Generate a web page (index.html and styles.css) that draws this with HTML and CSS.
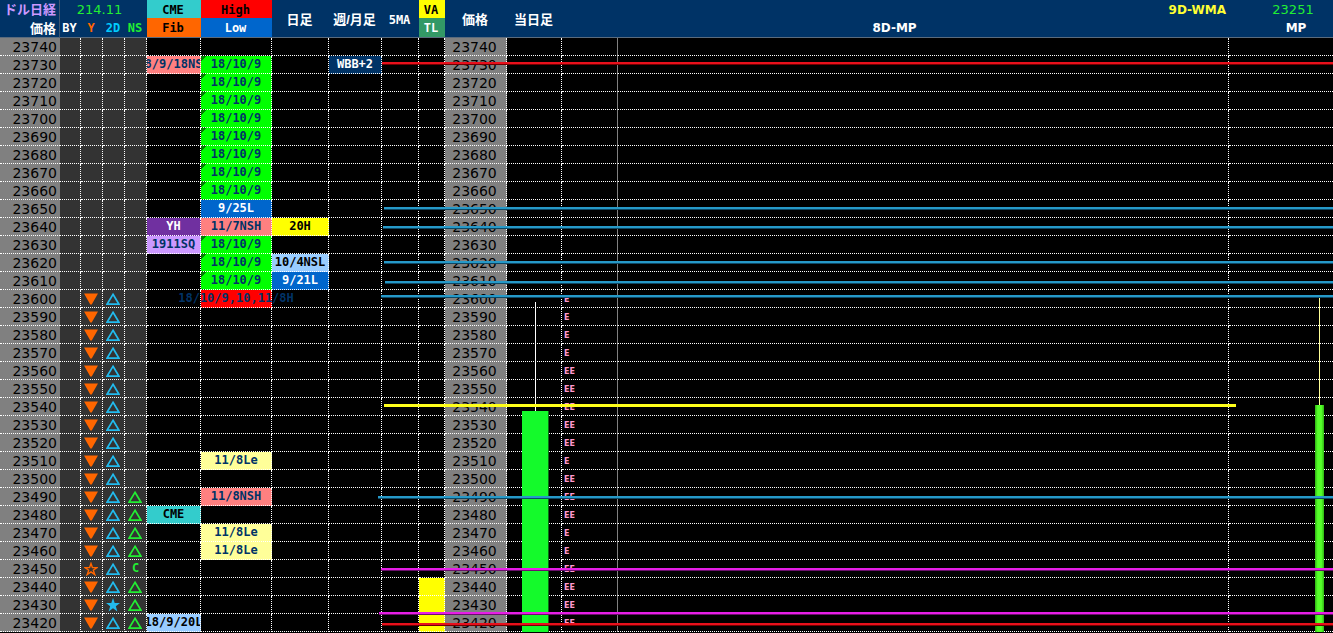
FILE: index.html
```html
<!DOCTYPE html>
<html lang="ja">
<head>
    <meta charset="UTF-8">
    <meta name="viewport" content="width=device-width, initial-scale=1.0">
    <title>ドル日経</title>
    <link rel="stylesheet" href="styles.css">
</head>
<body>
    <svg class="symbols" aria-hidden="true">
        <symbol id="down" viewBox="0 0 14 12"><path d="M0 0.5h14L7.7 11.5H6.3z" fill="currentColor"/></symbol>
        <symbol id="up" viewBox="0 0 14 12"><path d="M7 1.3L13 11.2H1z" fill="none" stroke="currentColor" stroke-width="1.7"/></symbol>
        <symbol id="star" viewBox="0 0 14 14"><path d="M7 0l1.7 5H14L9.8 8.2 11.4 13.5 7 10.3 2.6 13.5 4.2 8.2 0 5h5.3z" fill="currentColor"/></symbol>
        <symbol id="star-open" viewBox="0 0 14 14"><path d="M7 1.5l1.4 4.1H13L9.3 8.2 10.8 12.6 7 9.9 3.2 12.6 4.7 8.2 1 5.6h4.6z" fill="none" stroke="currentColor" stroke-width="1.4"/></symbol>
    </svg>

    <div class="board">
        <table class="sheet">
            <colgroup>
                <col class="c-price"><col class="c-by"><col class="c-mark"><col class="c-mark"><col class="c-mark">
                <col class="c-cme"><col class="c-high"><col class="c-day"><col class="c-week"><col class="c-ma"><col class="c-va">
                <col class="c-price2"><col class="c-today"><col class="c-tpo"><col><col class="c-mp">
            </colgroup>
            <thead>
                <tr>
                    <th class="title">ドル日経</th>
                    <th class="value" colspan="4">214.11</th>
                    <th class="cme">CME</th>
                    <th class="high">High</th>
                    <th class="jp" rowspan="2">日足</th>
                    <th class="jp" rowspan="2">週/月足</th>
                    <th rowspan="2">5MA</th>
                    <th class="va">VA</th>
                    <th class="jp" rowspan="2">価格</th>
                    <th class="jp" rowspan="2">当日足</th>
                    <th class="wma" colspan="2">9D-WMA</th>
                    <th class="value last">23251</th>
                </tr>
                <tr>
                    <th class="sub">価格</th>
                    <th>BY</th>
                    <th class="orange">Y</th>
                    <th class="cyan">2D</th>
                    <th class="green">NS</th>
                    <th class="fib">Fib</th>
                    <th class="low">Low</th>
                    <th class="tl">TL</th>
                    <th class="wide" colspan="2">8D-MP</th>
                    <th class="wide last">MP</th>
                </tr>
            </thead>
            <tbody id="rows"></tbody>
        </table>

        <div class="candle today"></div>
        <div class="candle mp"></div>

        <div class="line red y1"></div>
        <div class="line blue y2"></div>
        <div class="line blue y3"></div>
        <div class="line blue y4"></div>
        <div class="line blue y5"></div>
        <div class="line blue y6"></div>
        <div class="line yellow y7"></div>
        <div class="line blue y8"></div>
        <div class="line pink y9"></div>
        <div class="line pink y10"></div>
        <div class="line red y11"></div>
    </div>

    <script>
        const TOP = 23740;
        const BOTTOM = 23420;

        // price -> { column: [text, style] }
        const cells = {
            23730: { cme: ['18/9/18NSH', 'salmon'], week: ['WBB+2', 'navy'] },
            23650: { high: ['9/25L', 'blue-cell'] },
            23640: { cme: ['YH', 'purple'], high: ['11/7NSH', 'salmon'], day: ['20H', 'yellow-cell'] },
            23630: { cme: ['1911SQ', 'lilac'] },
            23620: { day: ['10/4NSL', 'sky'] },
            23610: { day: ['9/21L', 'blue-cell'] },
            23600: { high: ['18/10/9,10,11/8H', 'red-cell'] },
            23510: { high: ['11/8Le', 'cream'] },
            23490: { high: ['11/8NSH', 'salmon'] },
            23480: { cme: ['CME', 'teal'] },
            23470: { high: ['11/8Le', 'cream'] },
            23460: { high: ['11/8Le', 'cream'] },
            23420: { cme: ['18/9/20L', 'sky'] }
        };

        // High column is filled with the same date on these prices
        [23730, 23720, 23710, 23700, 23690, 23680, 23670, 23660, 23630, 23620, 23610].forEach(p => {
            cells[p] = cells[p] || {};
            cells[p].high = ['18/10/9', 'lime'];
        });

        const singleTpo = [23600, 23590, 23580, 23570, 23510, 23470, 23460];

        function icon(name) {
            return `<svg class="icon"><use href="#${name}"/></svg>`;
        }

        function cell(row, column) {
            const [text, style] = row[column] || ['', ''];
            return `<td class="${style}"><span class="tag">${text}</span></td>`;
        }

        let html = '';
        for (let price = TOP; price >= BOTTOM; price -= 10) {
            const row = cells[price] || {};
            const y = price > 23600 ? '' : icon(price === 23450 ? 'star-open' : 'down');
            const d2 = price > 23600 ? '' : icon(price === 23430 ? 'star' : 'up');
            const ns = price > 23490 ? '' : price === 23450 ? 'C' : icon('up');
            const tpo = price > 23600 ? '' : singleTpo.includes(price) ? 'E' : 'EE';

            html += `<tr>
                <td class="price first">${price}</td>
                <td class="mark"></td>
                <td class="mark orange">${y}</td>
                <td class="mark sky-text">${d2}</td>
                <td class="mark green">${ns}</td>
                ${cell(row, 'cme')}${cell(row, 'high')}${cell(row, 'day')}${cell(row, 'week')}
                <td></td>
                <td class="${price <= 23440 ? 'yellow-cell' : ''}"></td>
                <td class="price">${price}</td>
                <td></td>
                <td class="tpo">${tpo}</td>
                <td></td>
                <td class="end"></td>
            </tr>`;
        }
        document.getElementById('rows').innerHTML = html;
    </script>
</body>
</html>
```
FILE: styles.css
```css
* {
    margin: 0;
    padding: 0;
    box-sizing: border-box;
}

body {
    background: #000;
    color: #fff;
    font-family: "DejaVu Sans Mono", "Noto Sans CJK JP", monospace;
    font-size: 12px;
    font-weight: bold;
    overflow: hidden;
}

.symbols {
    position: absolute;
    width: 0;
    height: 0;
}

.board {
    position: relative;
}

.sheet {
    width: 100%;
    table-layout: fixed;
    border-collapse: separate;
    border-spacing: 0;
}

.c-price { width: 60px; }
.c-by { width: 21px; }
.c-mark { width: 22px; }
.c-cme { width: 54px; }
.c-high { width: 71px; }
.c-day { width: 57px; }
.c-week { width: 53px; }
.c-ma { width: 37px; }
.c-va { width: 26px; }
.c-price2 { width: 62px; }
.c-today { width: 55px; }
.c-tpo { width: 56px; }
.c-mp { width: 104px; }

/* header */
th {
    height: 18px;
    line-height: 16px;
    padding-top: 2px;
    padding-right: 2px;
    background: #003366;
    white-space: nowrap;
    vertical-align: middle;
}

thead tr:last-child th {
    height: 20px;
    line-height: 17px;
}

thead tr:last-child th,
th[rowspan] {
    border-bottom: 1px solid #5a6b7d;
}

.title,
.sub,
.jp {
    font-family: "Liberation Sans", "Noto Sans CJK JP", sans-serif;
    font-size: 13px;
}

.title {
    color: #cc99ff;
    text-align: right;
    padding-right: 3px;
    border-right: 1px solid #3f5670;
}

.sub {
    text-align: right;
    padding-right: 3px;
    border-right: 1px solid #3f5670;
}

.value,
.wma,
.wide {
    font-family: "DejaVu Sans", sans-serif;
}

.value {
    color: #22ee33;
    font-size: 13px;
    font-weight: normal;
    padding-right: 8px;
}

.wma {
    color: #ffff33;
    text-align: right;
    padding-right: 3px;
}

.last {
    padding-left: 32px;
}

.orange { color: #ff6600; }
.cyan { color: #00ccff; }
.green { color: #22ee33; }
.sky-text { color: #22bbee; }

.cme { background: #33cccc; color: #000; }
.high { background: #ff0000; color: #000; }
.va { background: #ffff00; color: #000; }
.fib { background: #ff6600; color: #000; }
.low { background: #0066cc; }
.tl { background: #339966; }

/* price rows */
td {
    height: 18px;
    line-height: 17px;
    border-right: 1px dotted #fff;
    border-bottom: 1px dotted #fff;
    text-align: center;
    white-space: nowrap;
}

.price,
.tpo {
    font-family: "DejaVu Sans", sans-serif;
    line-height: 15px;
    padding-top: 2px;
}

.price {
    background: #808080;
    color: #000;
    font-size: 14px;
    font-weight: normal;
    padding-right: 2px;
}

.first {
    text-align: right;
    padding-right: 3px;
    border-right: none;
}

.mark {
    background: #333;
}

.icon {
    display: block;
    width: 14px;
    height: 14px;
    margin: 2px 3px 1px;
}

.tag {
    display: flex;
    justify-content: center;
    height: 17px;
    overflow: hidden;
}

.tpo {
    color: #ff99cc;
    font-size: 8px;
    text-align: left;
    padding-left: 2px;
    border-right: 1px solid #808080;
}

.end {
    border-right: none;
}

.salmon { background: #ff8080; color: #003366; }
.navy { background: #003366; }
.blue-cell { background: #0066cc; }
.purple { background: #7030a0; }
.lilac { background: #cc99ff; color: #003366; }
.yellow-cell { background: #ffff00; color: #000; }
.sky { background: #99ccff; color: #000; }
.teal { background: #33cccc; color: #000; }
.cream { background: #ffff99; color: #003366; }
.red-cell { background: #ff0000; color: #003366; }

.red-cell .tag {
    overflow: visible;
}

.lime {
    background: linear-gradient(135deg, #008000 4px, #00ff00 4px);
    color: #003366;
}

/* level lines drawn over the grid */
.line {
    position: absolute;
    right: 0;
    left: 384px;
    height: 2px;
}

.blue { background: #2699c8; box-shadow: 0 1px #0d4966; }
.red { background: #e8101c; box-shadow: 0 1px #700000; }
.pink { background: #e61ee6; box-shadow: 0 1px #6b0f6b; }
.yellow { background: #ffff1a; height: 3px; right: 97px; }

.y1 { top: 62px; left: 382px; }
.y2 { top: 207px; }
.y3 { top: 226px; left: 383px; }
.y4 { top: 261px; }
.y5 { top: 281px; left: 385px; }
.y6 { top: 295px; left: 381px; }
.y7 { top: 404px; }
.y8 { top: 496px; left: 378px; }
.y9 { top: 568px; left: 381px; }
.y10 { top: 612px; left: 379px; }
.y11 { top: 623px; left: 382px; }

/* candles */
.candle {
    position: absolute;
    bottom: 0;
}

.candle::before {
    content: "";
    position: absolute;
    bottom: 100%;
    width: 1px;
    background: #fff;
}

.today {
    top: 411px;
    left: 522px;
    width: 26px;
    background: #14fa2b;
    box-shadow: 1px 0 #0a6b14;
}

.today::before {
    left: 13px;
    height: 109px;
}

.mp {
    top: 405px;
    right: 9px;
    width: 9px;
    background: linear-gradient(90deg, #2fb512, #55ff2a 30%, #55ff2a 70%, #2fb512);
}

.mp::before {
    left: 4px;
    height: 107px;
    background: #ffff99;
}
```
